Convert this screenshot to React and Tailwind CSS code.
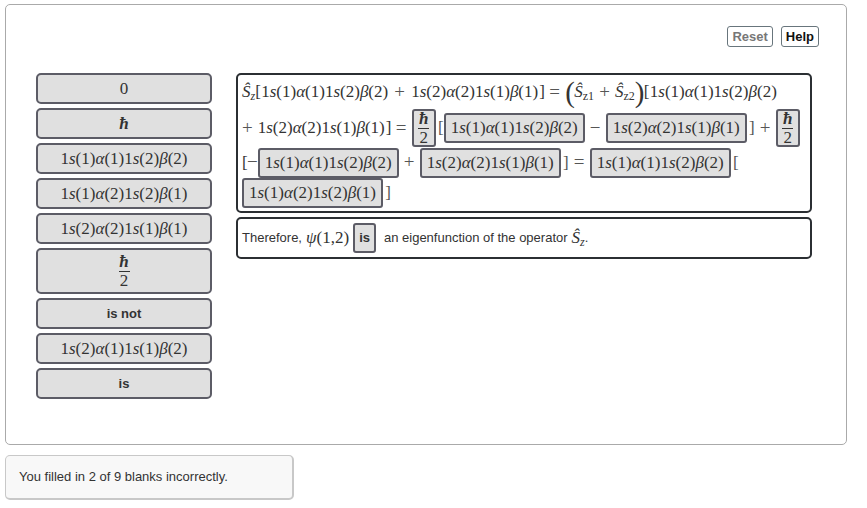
import React from 'react';

const Hbar = () => <i className="font-bold">ħ</i>;

// n holds the electron labels in the order they are written
const Orbitals = ({ n }) => (
    <span className="inline-flex w-[129px] justify-center whitespace-nowrap font-['Liberation_Serif',serif] text-[17px] leading-5">
        1<i>s</i>({n[0]})<i>α</i>({n[1]})1<i>s</i>({n[2]})<i>β</i>({n[3]})
    </span>
);

const Fraction = () => (
    <span className="inline-flex flex-col items-center font-['Liberation_Serif',serif] text-[17px] leading-4">
        <Hbar />
        <span className="my-px w-[11px] border-t border-[#333]" />
        <span>2</span>
    </span>
);

const Op = ({ children }) => (
    <span className="w-[21px] text-center text-[19px] text-[#555]">{children}</span>
);

const Bracket = ({ children }) => <span className="w-[5px] text-center">{children}</span>;

// bracket that follows or precedes a filled blank
const SlotBracket = ({ children }) => (
    <span className="flex w-2 justify-end text-[#555]">{children}</span>
);

const Paren = ({ children }) => (
    <span className="w-[9px] text-center text-[29px] leading-8">{children}</span>
);

const Spin = ({ sub }) => (
    <span className="whitespace-nowrap">
        <i>Ŝ</i>
        <sub className="text-[12px] leading-none">{sub}</sub>
    </span>
);

const Tile = ({ children }) => (
    <button className="flex min-h-[31px] w-full items-center justify-center rounded-[5px] border-2 border-[#5c5c66] bg-[#e0e0e0] text-[13px] font-bold">
        {children}
    </button>
);

const MathTile = ({ children }) => (
    <Tile>
        <span className="font-['Liberation_Serif',serif] text-[17px] leading-5 font-normal">{children}</span>
    </Tile>
);

const Slot = ({ children }) => (
    <button className="flex h-[30px] shrink-0 items-center justify-center rounded-[3px] border-2 border-[#5c5c66] bg-[#e0e0e0] px-1">
        {children}
    </button>
);

const FractionSlot = () => (
    <button className="flex h-[38px] w-6 shrink-0 items-center justify-center rounded-[3px] border-2 border-[#5c5c66] bg-[#e0e0e0]">
        <Fraction />
    </button>
);

const App = () => {
    return (
        <div className="bg-white pt-1 pr-5 pl-[5px] font-['Liberation_Sans',sans-serif] text-[13px] text-[#333]">
            <main className="rounded-[5px] border border-[#aaa] pt-[21px] pr-[27px] pb-[45px] pl-[30px]">
                <div className="flex justify-end gap-2">
                    <button className="h-[21px] rounded-[3px] border border-[#68757c] px-1 leading-4 font-bold text-[#777]">
                        Reset
                    </button>
                    <button className="h-[21px] rounded-[3px] border border-[#68757c] px-1 leading-4 font-bold text-[#111]">
                        Help
                    </button>
                </div>

                <div className="mt-[26px] flex items-start gap-6">
                    <div className="flex w-[176px] shrink-0 flex-col gap-1">
                        <MathTile>0</MathTile>
                        <MathTile><Hbar /></MathTile>
                        <MathTile><Orbitals n="1122" /></MathTile>
                        <MathTile><Orbitals n="1221" /></MathTile>
                        <MathTile><Orbitals n="2211" /></MathTile>
                        <button className="flex h-[46px] items-center justify-center rounded-[5px] border-2 border-[#5c5c66] bg-[#e0e0e0]">
                            <Fraction />
                        </button>
                        <Tile>is not</Tile>
                        <MathTile><Orbitals n="2112" /></MathTile>
                        <Tile>is</Tile>
                    </div>

                    <div className="flex max-w-[576px] flex-1 flex-col gap-1">
                        <section className="rounded-[5px] border-2 border-[#2b2f33] px-1 pb-1 font-['Liberation_Serif',serif] text-[17px]">
                            <div className="flex h-[34px] items-center">
                                <Spin sub={<i>z</i>} />
                                <Bracket>[</Bracket>
                                <Orbitals n="1122" />
                                <Op>+</Op>
                                <Orbitals n="2211" />
                                <Bracket>]</Bracket>
                                <Op>=</Op>
                                <Paren>(</Paren>
                                <Spin sub="z1" />
                                <Op>+</Op>
                                <Spin sub="z2" />
                                <Paren>)</Paren>
                                <Bracket>[</Bracket>
                                <Orbitals n="1122" />
                            </div>
                            <div className="flex h-[38px] items-center">
                                <span className="mr-1 text-[19px] text-[#555]">+</span>
                                <Orbitals n="2211" />
                                <Bracket>]</Bracket>
                                <Op>=</Op>
                                <FractionSlot />
                                <SlotBracket>[</SlotBracket>
                                <Slot><Orbitals n="1122" /></Slot>
                                <Op>−</Op>
                                <Slot><Orbitals n="2211" /></Slot>
                                <SlotBracket>]</SlotBracket>
                                <Op>+</Op>
                                <FractionSlot />
                            </div>
                            <div className="flex h-[31px] items-center">
                                <Bracket>[</Bracket>
                                <span className="text-[19px] text-[#555]">−</span>
                                <Slot><Orbitals n="1122" /></Slot>
                                <Op>+</Op>
                                <Slot><Orbitals n="2211" /></Slot>
                                <SlotBracket>]</SlotBracket>
                                <Op>=</Op>
                                <Slot><Orbitals n="1122" /></Slot>
                                <SlotBracket>[</SlotBracket>
                            </div>
                            <div className="flex h-[29px] items-center">
                                <Slot><Orbitals n="1221" /></Slot>
                                <SlotBracket>]</SlotBracket>
                            </div>
                        </section>

                        <section className="flex h-[42px] items-center rounded-[5px] border-2 border-[#2b2f33] px-1 whitespace-nowrap">
                            Therefore,
                            <span className="mx-1 font-['Liberation_Serif',serif] text-[17px]"><i>ψ</i>(1,2)</span>
                            <Slot><b>is</b></Slot>
                            <span className="ml-2">an eigenfunction of the operator</span>
                            <span className="ml-1 font-['Liberation_Serif',serif] text-[17px]"><Spin sub={<i>z</i>} /></span>
                            .
                        </section>
                    </div>
                </div>
            </main>

            <div role="status" className="mt-[10px] flex h-[45px] w-[289px] items-center rounded-[5px] border border-r-2 border-b-2 border-[#c8c8c8] bg-[#f8f8f8] px-[13px]">
                You filled in 2 of 9 blanks incorrectly.
            </div>
        </div>
    );
};

export default App;
